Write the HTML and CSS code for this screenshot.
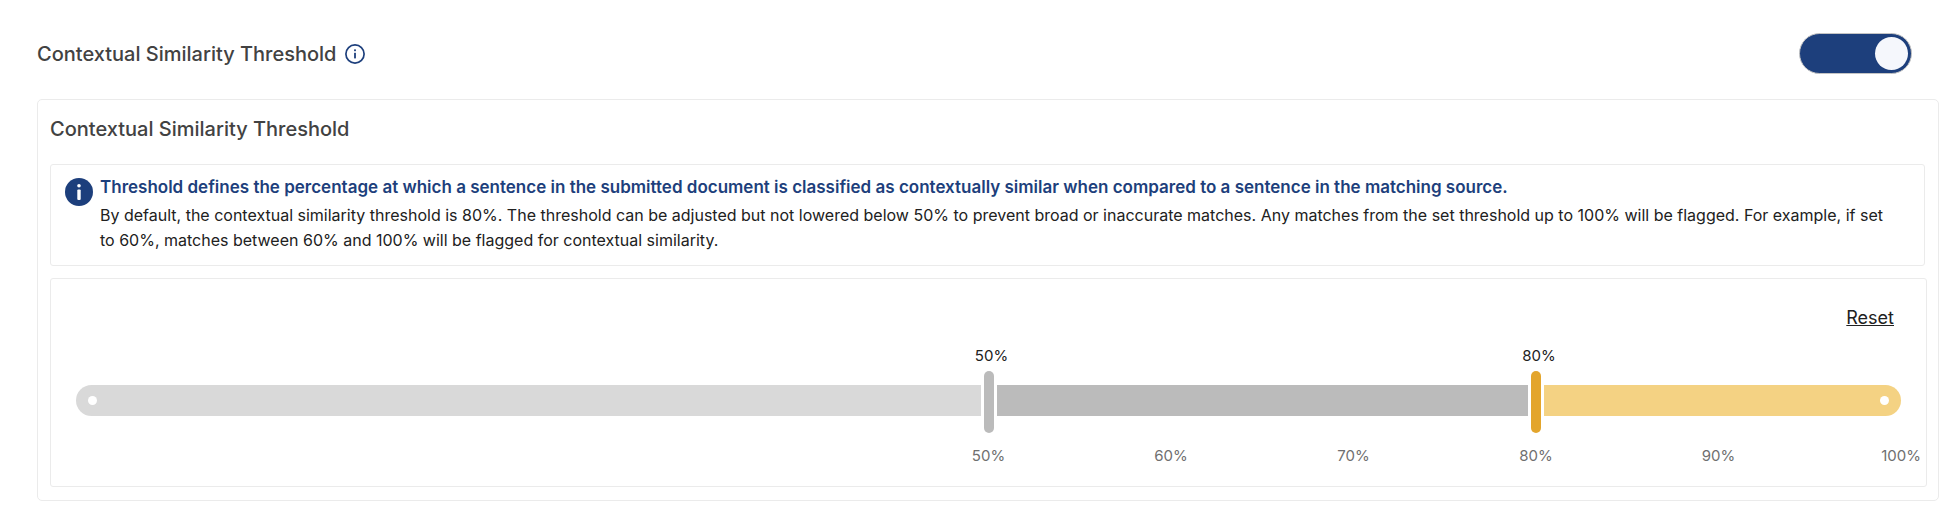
FILE: index.html
```html
<!DOCTYPE html>
<html lang="en">
<head>
<meta charset="utf-8">
<title>Contextual Similarity Threshold</title>
<link rel="stylesheet" href="styles.css">
</head>
<body>
<main class="settings">
  <header class="settings-header">
    <label class="heading" for="threshold-toggle">Contextual Similarity Threshold</label>
    <button class="info-button" type="button" aria-label="More information">
      <svg class="info-outline" viewBox="0 0 20 20" aria-hidden="true">
        <circle cx="10" cy="10" r="9.1" fill="none" stroke="currentColor" stroke-width="1.7"/>
        <rect x="9.1" y="5.4" width="1.8" height="1.8" fill="currentColor"/>
        <rect x="9.1" y="8.8" width="1.8" height="5.6" fill="currentColor"/>
      </svg>
    </button>
    <input class="toggle" id="threshold-toggle" type="checkbox" role="switch" checked>
  </header>

  <section class="card">
    <h2 class="heading">Contextual Similarity Threshold</h2>

    <div class="notice">
      <svg class="info-solid" viewBox="0 0 28 28" aria-hidden="true">
        <circle cx="14" cy="14" r="14" fill="currentColor"/>
        <circle cx="14" cy="7.7" r="1.8" fill="#fff"/>
        <rect x="12.3" y="11.5" width="3.4" height="10.5" rx="1" fill="#fff"/>
      </svg>
      <div class="notice-body">
        <h3 class="notice-title">Threshold defines the percentage at which a sentence in the submitted document is classified as contextually similar when compared to a sentence in the matching source.</h3>
        <p class="notice-text">By default, the contextual similarity threshold is 80%. The threshold can be adjusted but not lowered below 50% to prevent broad or inaccurate matches. Any matches from the set threshold up to 100% will be flagged. For example, if set to 60%, matches between 60% and 100% will be flagged for contextual similarity.</p>
      </div>
    </div>

    <div class="slider-panel">
      <button class="reset" type="button">Reset</button>
      <div class="slider">
        <div class="values">
          <output class="mark mark-min" for="minimum">50%</output>
          <output class="mark mark-current" for="threshold">80%</output>
        </div>
        <div class="track">
          <span class="segment segment-low"></span>
          <span class="segment segment-mid"></span>
          <span class="segment segment-high"></span>
          <input class="range range-min" id="minimum" type="range" min="0" max="100" value="50" aria-label="Minimum threshold">
          <input class="range range-current" id="threshold" type="range" min="0" max="100" value="80" aria-label="Similarity threshold">
        </div>
        <div class="ticks">
          <span class="mark">50%</span>
          <span class="mark">60%</span>
          <span class="mark">70%</span>
          <span class="mark">80%</span>
          <span class="mark">90%</span>
          <span class="mark">100%</span>
        </div>
      </div>
    </div>
  </section>
</main>
</body>
</html>
```

FILE: styles.css
```css
* {
  box-sizing: border-box;
}

body {
  margin: 0;
  background: #fff;
  color: #212121;
  font-family: Inter, "Liberation Sans", sans-serif;
  font-size: 16px;
}

button {
  padding: 0;
  border: 0;
  background: none;
  color: inherit;
  font: inherit;
  cursor: pointer;
}

.settings {
  padding: 33px 13px 4px 37px;
}

.settings-header {
  display: flex;
  align-items: center;
  padding-right: 27px;
  margin-bottom: 25px;
}

.heading {
  margin: 0;
  color: #424242;
  font-size: 20px;
  font-weight: 500;
  line-height: 24px;
}

.info-button {
  display: flex;
  margin-left: 9px;
  color: #1d3f7c;
}

.info-outline {
  width: 20px;
  height: 20px;
}

.toggle {
  display: flex;
  align-items: center;
  justify-content: flex-end;
  width: 113px;
  height: 41px;
  margin: 0 0 0 auto;
  padding: 0 3px;
  border: 1px solid #c4c4c4;
  border-radius: 21px;
  background: #1d3f7c;
  appearance: none;
  cursor: pointer;
}

.toggle::before {
  width: 33px;
  height: 33px;
  border-radius: 50%;
  background: #f5f7fc;
  content: "";
}

.toggle:not(:checked) {
  justify-content: flex-start;
  background: #bbb;
}

.card {
  padding: 17px 11px 13px 12px;
  border: 1px solid #ebebeb;
  border-radius: 5px;
}

.notice,
.slider-panel {
  border: 1px solid #ebebeb;
  border-radius: 3px;
}

.notice {
  display: flex;
  gap: 7px;
  margin: 23px 2px 12px 0;
  padding: 11px 24px 12px 14px;
}

.info-solid {
  flex: none;
  width: 28px;
  height: 28px;
  margin-top: 2px;
  color: #1d3f7c;
}

.notice-title,
.notice-text {
  margin: 0;
}

.notice-title {
  margin-bottom: 5px;
  color: #1d3f7c;
  font-size: 17px;
  font-weight: 600;
  line-height: 22px;
}

.notice-text {
  line-height: 25px;
}

.slider-panel {
  padding: 26px 25px 20px;
}

.reset {
  display: block;
  margin: 0 7px 0 auto;
  font-size: 18px;
  line-height: 26px;
  text-decoration: underline;
}

.slider,
.values,
.track {
  display: grid;
}

.slider {
  font-size: 15px;
  line-height: 20px;
}

.values,
.track {
  grid-template-columns: 50% 30% 20%;
}

.values {
  margin: 15px -3px 5px 3px;
}

.mark {
  display: flex;
  justify-content: center;
  width: 0;
}

.mark-min {
  grid-column: 2;
}

.mark-current {
  grid-column: 3;
}

.segment {
  grid-row: 1;
  height: 31px;
  margin-top: 14px;
}

.segment::before,
.segment::after {
  width: 9px;
  height: 9px;
  border-radius: 50%;
  background: #fff;
}

.segment-low,
.segment-high {
  display: flex;
  align-items: center;
  padding: 0 12px;
}

.segment-low {
  grid-column: 1;
  margin-right: 8px;
  border-radius: 16px 0 0 16px;
  background: #d9d9d9;
}

.segment-low::before {
  content: "";
}

.segment-mid {
  grid-column: 2;
  margin-right: 8px;
  margin-left: 8px;
  background: #bbb;
}

.segment-high {
  grid-column: 3;
  justify-content: flex-end;
  margin-left: 8px;
  border-radius: 0 16px 16px 0;
  background: #f4d283;
}

.segment-high::after {
  content: "";
}

.range {
  grid-row: 1;
  grid-column: 1 / -1;
  height: 62px;
  margin: 0 -5px;
  background: none;
  appearance: none;
  pointer-events: none;
}

.range::-webkit-slider-thumb {
  width: 10px;
  height: 62px;
  border-radius: 5px;
  appearance: none;
  cursor: pointer;
  pointer-events: auto;
}

.range-min::-webkit-slider-thumb {
  background: #bbb;
}

.range-current::-webkit-slider-thumb {
  background: #e3a52c;
}

.ticks {
  display: flex;
  justify-content: space-between;
  margin: 13px 0 0 50%;
  color: #6f6f6f;
}
```
